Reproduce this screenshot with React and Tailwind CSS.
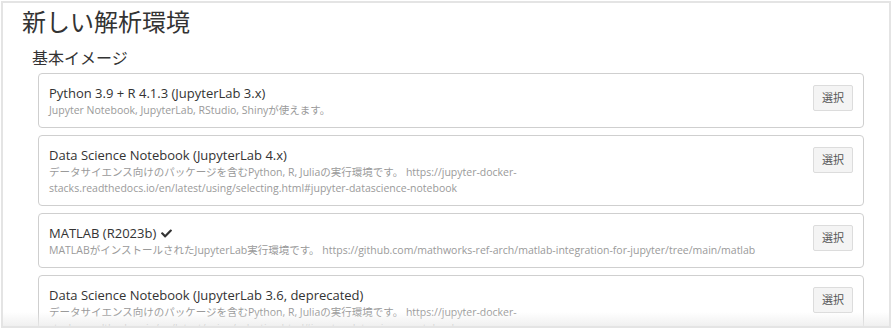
import { FaCheck } from 'react-icons/fa';

const images = [
  {
    title: 'Python 3.9 + R 4.1.3 (JupyterLab 3.x)',
    lines: ['Jupyter Notebook, JupyterLab, RStudio, Shinyが使えます。'],
  },
  {
    title: 'Data Science Notebook (JupyterLab 4.x)',
    lines: [
      'データサイエンス向けのパッケージを含むPython, R, Juliaの実行環境です。 https://jupyter-docker-',
      'stacks.readthedocs.io/en/latest/using/selecting.html#jupyter-datascience-notebook',
    ],
  },
  {
    title: 'MATLAB (R2023b)',
    checked: true,
    lines: [
      'MATLABがインストールされたJupyterLab実行環境です。 https://github.com/mathworks-ref-arch/matlab-integration-for-jupyter/tree/main/matlab',
    ],
  },
  {
    title: 'Data Science Notebook (JupyterLab 3.6, deprecated)',
    lines: [
      'データサイエンス向けのパッケージを含むPython, R, Juliaの実行環境です。 https://jupyter-docker-',
      'stacks.readthedocs.io/en/latest/using/selecting.html#jupyter-datascience-notebook',
    ],
  },
];

export default function App() {
  return (
    <div className="w-[893px] h-[331px] bg-white pt-[1px] pl-[1px] font-['Open_Sans','Noto_Sans_CJK_JP',sans-serif]">
      <div className="relative h-[327px] w-[890px] overflow-hidden border-2 border-[#e4e4e4] pl-[19px] pr-[25px]">
        {/* Header */}
        <h1 className="pt-[4px] text-[24px] leading-[30px] text-[#333]">新しい解析環境</h1>

        <div className="mt-[11px] pl-[10px] text-[16px] leading-[20px] text-[#333]">基本イメージ</div>

        {/* Image list */}
        <div className="mt-[5px] pl-[16px] flex flex-col gap-[7px]">
          {images.map((img, i) => (
            <div key={i} className="flex items-start justify-between rounded-[4px] border border-[#cfcfcf] pl-[10px] pr-[10px] pt-[10px] pb-[9px]">
              <div className="min-w-0">
                <div className="flex items-center gap-[5px] text-[13px] leading-[18px] text-[#333]">
                  {img.title}
                  {img.checked && <FaCheck className="h-[11px] w-[11px] text-[#333]" />}
                </div>
                {img.lines.map((line, j) => (
                  <div key={j} className="whitespace-nowrap text-[10.5px] leading-[16px] text-[#9a9a9a]">{line}</div>
                ))}
              </div>
              <button className="mt-[1px] h-[26px] w-[40px] shrink-0 rounded-[2px] border border-[#dcdcdc] bg-[#f4f4f4] text-[11px] text-[#555]">
                選択
              </button>
            </div>
          ))}
        </div>

        {/* fade at the bottom edge */}
        <div className="absolute bottom-0 left-0 right-0 h-[14px] bg-gradient-to-b from-transparent to-[#ececec]/80" />
      </div>
    </div>
  );
}
